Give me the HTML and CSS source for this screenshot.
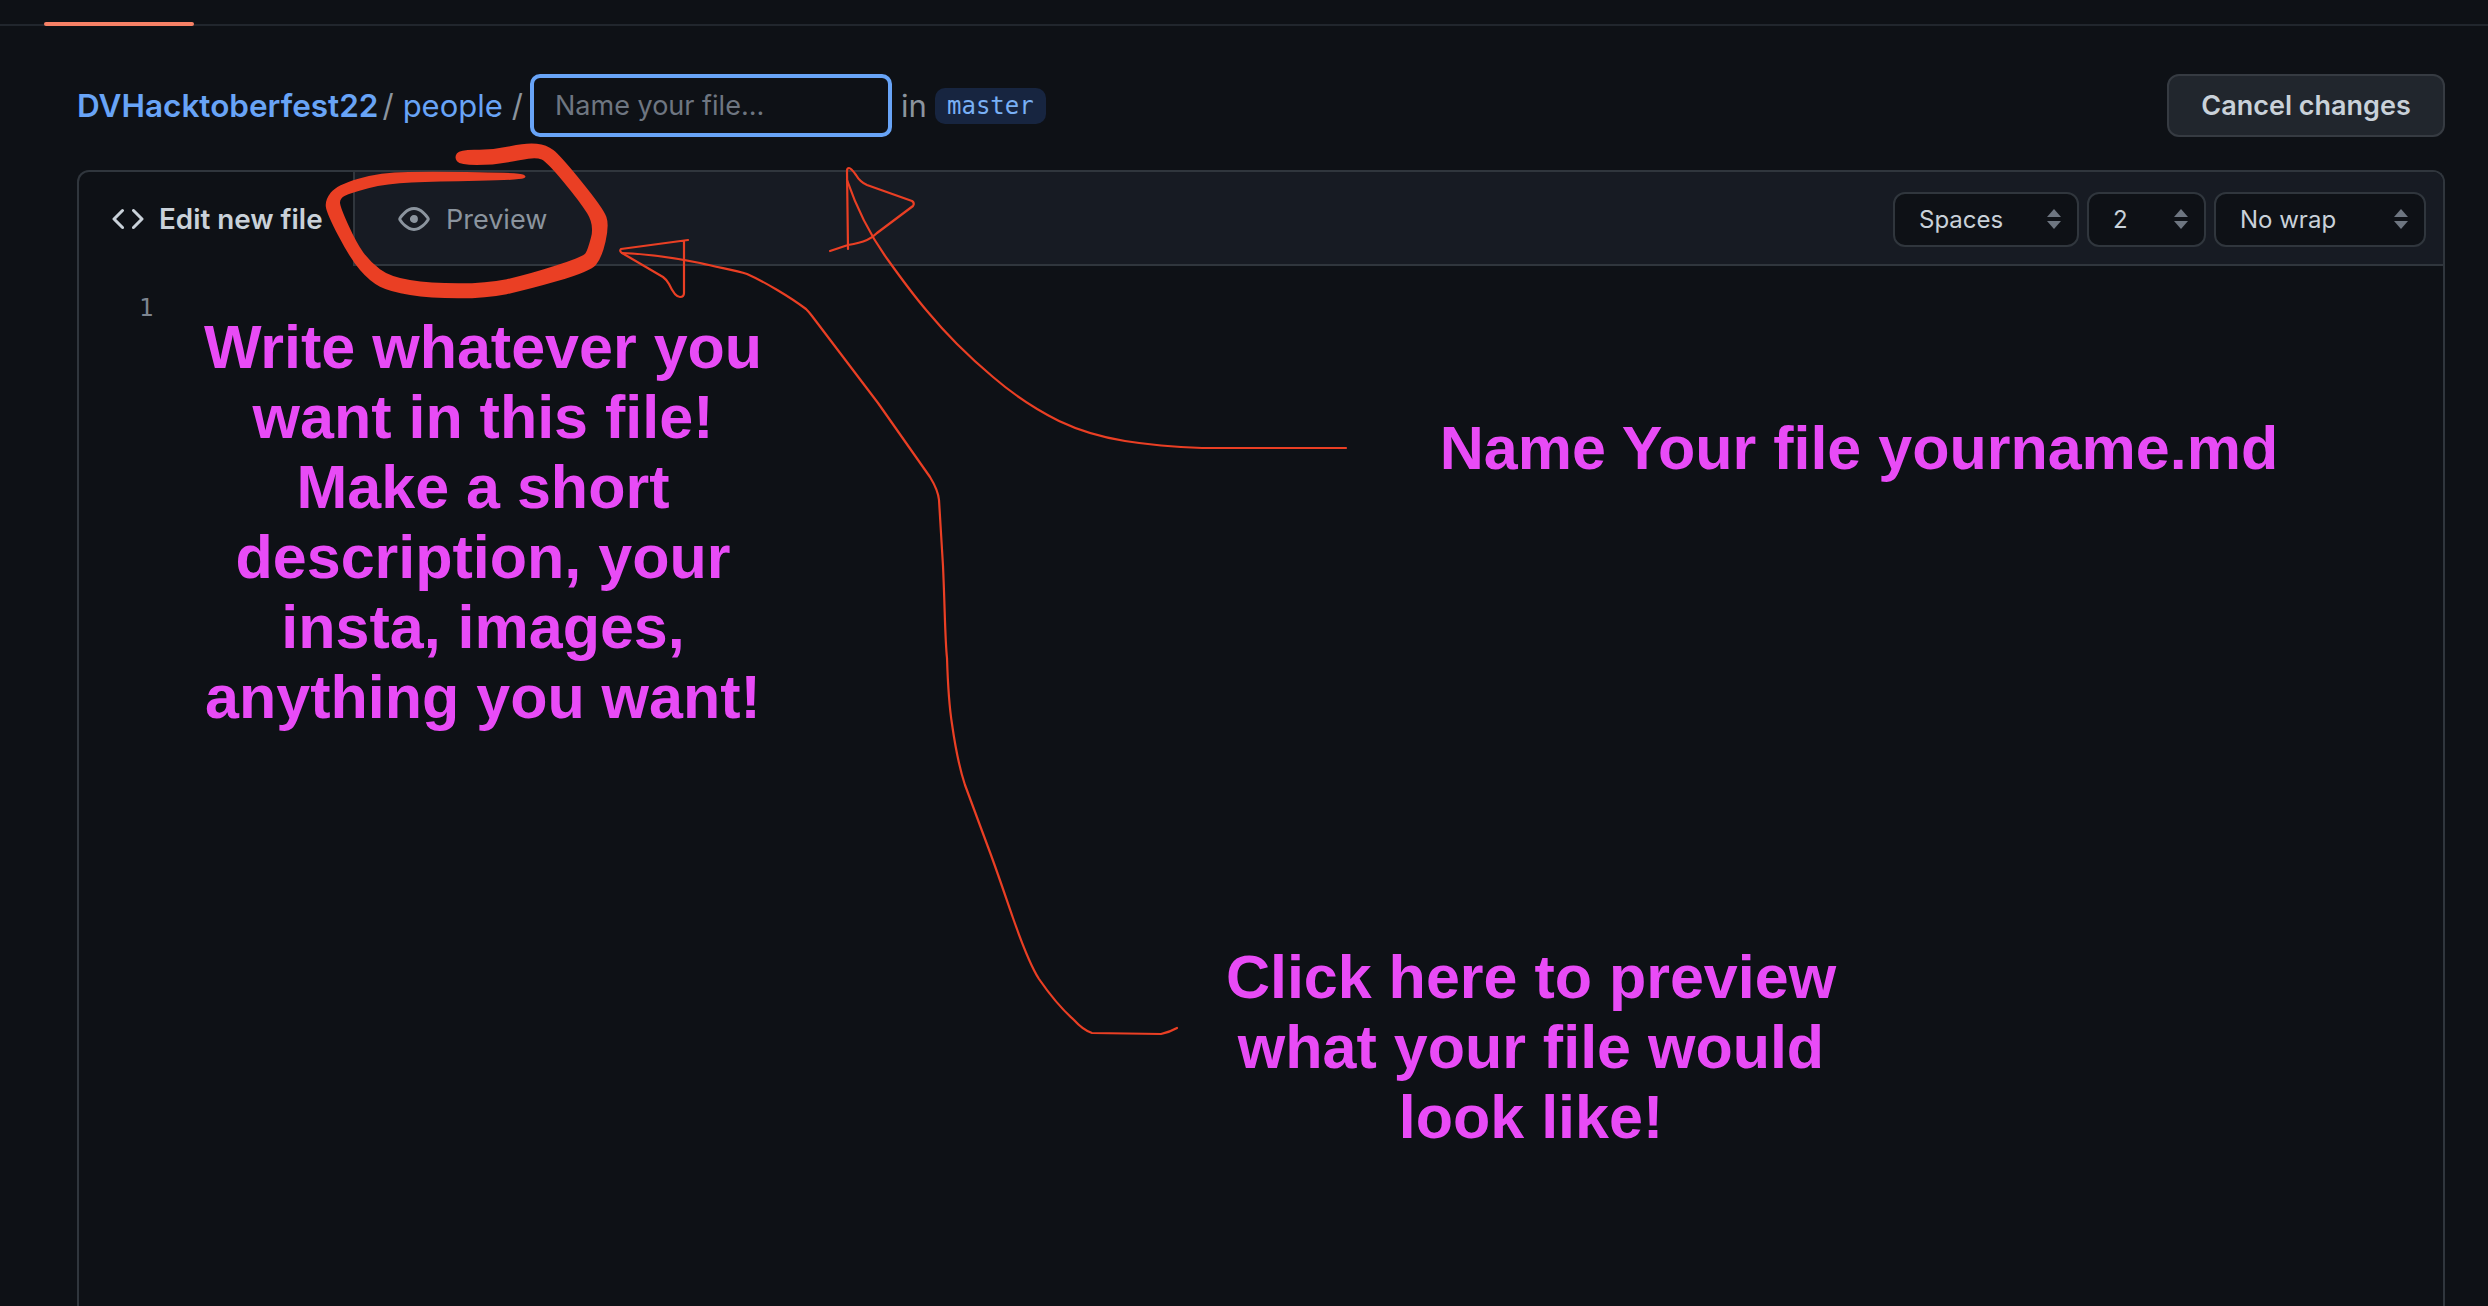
FILE: index.html
```html
<!DOCTYPE html>
<html lang="en">
<head>
<meta charset="utf-8">
<title>Edit new file</title>
<link rel="stylesheet" href="styles.css">
</head>
<body>
<div class="repo-nav"><span class="nav-current"></span></div>
<main class="page">
  <div class="path-row">
    <a class="crumb crumb-root">DVHacktoberfest22</a>
    <span class="sep sep-first">/</span>
    <a class="crumb">people</a>
    <span class="sep sep-last">/</span>
    <input class="name-input" type="text" placeholder="Name your file...">
    <span class="in-word">in</span>
    <code class="branch">master</code>
    <button class="cancel">Cancel changes</button>
  </div>
  <section class="editor">
    <div class="editor-head">
      <div class="tab tab-active">
        <svg class="icon" viewBox="0 0 16 16"><path d="m11.28 3.22 4.25 4.25a.75.75 0 0 1 0 1.06l-4.25 4.25a.749.749 0 0 1-1.275-.326.749.749 0 0 1 .215-.734L13.94 8l-3.72-3.72a.749.749 0 0 1 .326-1.275.749.749 0 0 1 .734.215Zm-6.56 0a.751.751 0 0 1 1.042.018.751.751 0 0 1 .018 1.042L2.06 8l3.72 3.72a.749.749 0 0 1-.326 1.275.749.749 0 0 1-.734-.215L.47 8.53a.75.75 0 0 1 0-1.06Z"/></svg>
        <span>Edit new file</span>
      </div>
      <div class="head-rest">
        <div class="tab tab-preview">
          <svg class="icon" viewBox="0 0 16 16"><path d="M8 2c1.981 0 3.671.992 4.933 2.078 1.27 1.091 2.187 2.345 2.637 3.023a1.62 1.62 0 0 1 0 1.798c-.45.678-1.367 1.932-2.637 3.023C11.67 13.008 9.981 14 8 14c-1.981 0-3.671-.992-4.933-2.078C1.797 10.83.88 9.576.43 8.898a1.62 1.62 0 0 1 0-1.798c.45-.677 1.367-1.931 2.637-3.022C4.33 2.992 6.019 2 8 2ZM1.679 7.932a.12.12 0 0 0 0 .136c.411.622 1.241 1.75 2.366 2.717C5.176 11.758 6.527 12.5 8 12.5c1.473 0 2.825-.742 3.955-1.715 1.124-.967 1.954-2.096 2.366-2.717a.12.12 0 0 0 0-.136c-.412-.621-1.242-1.75-2.366-2.717C10.824 4.242 9.473 3.5 8 3.5c-1.473 0-2.825.742-3.955 1.715-1.124.967-1.954 2.096-2.366 2.717ZM8 10a2 2 0 1 1-.001-3.999A2 2 0 0 1 8 10Z"/></svg>
          <span>Preview</span>
        </div>
        <div class="options">
          <div class="select sel-indent"><span>Spaces</span><svg class="updown" viewBox="0 0 16 20"><path d="M8 0l7 8H1zM8 20l-7-8h14z"/></svg></div>
          <div class="select sel-size"><span>2</span><svg class="updown" viewBox="0 0 16 20"><path d="M8 0l7 8H1zM8 20l-7-8h14z"/></svg></div>
          <div class="select sel-wrap"><span>No wrap</span><svg class="updown" viewBox="0 0 16 20"><path d="M8 0l7 8H1zM8 20l-7-8h14z"/></svg></div>
        </div>
      </div>
    </div>
    <div class="code"><span class="line-no">1</span></div>
  </section>
</main>

<svg class="scribbles" viewBox="0 0 2488 1306" width="2488" height="1306">
  <g transform="translate(320 130) scale(.33333)">
    <path class="blob" d="M411 93.5Q402 82 411 70Q420 58 470 59Q520 60 570 49Q620 38 650 41.5Q680 45 700 60Q720 75 785 155Q850 235 859 260Q868 285 856.5 335Q845 385 827.5 405Q810 425 715 452.5Q620 480 560 492.5Q500 505 415 505Q330 505 270 495Q210 485 180 470Q150 455 120 420Q90 385 55 317.5Q20 250 17.5 230Q15 210 32.5 187.5Q50 165 115 146Q180 127 265 126Q350 125 475 126.5Q600 128 611 134Q622 140 611 145Q600 150 475 152.5Q350 155 275 157.5Q200 160 145 175Q90 190 75 197.5Q60 205 60 217.5Q60 230 85 285Q110 340 130 367.5Q150 395 180 417.5Q210 440 270 450Q330 460 415 460Q500 460 560 447.5Q620 435 705 407.5Q790 380 796.5 370Q803 360 813 322.5Q823 285 801.5 250Q780 215 730 155Q680 95 665 88.5Q650 82 625 86Q600 90 560 97.5Q520 105 470 105Q420 105 411 93.5Z"/>
  </g>
  <path class="pen" d="M688 240L621 249Q619 251 622 253L663 277Q667 280 669 284Q675 297 680 297Q684 297 684 293L684 242"/>
  <path class="pen" d="M622 253C650 254 675 258 700 263C720 268 735 270 747 274C765 282 790 297 806 309Q809 312 812 316L878 403L930 477Q938 490 939 500L943 566C945 610 945 640 947 658C948 690 949 705 952 724C955 745 960 770 965 785L988 847C996 868 1005 895 1013 918C1020 938 1030 965 1039 979C1050 995 1065 1012 1074 1020Q1083 1030 1092 1033L1161 1034Q1170 1032 1177 1028"/>
  <path class="pen" d="M830 251L848 245Q860 243 867 240Q872 238 877 233L913 206Q915 203 912 201L867 185Q860 182 856 175Q851 168 849 168Q847 168 847 171L848 249"/>
  <path class="pen" d="M847 180C858 212 872 238 888 260C903 281 915 297 927 311C937 323 947 334 957 344C969 356 981 367 993 377C1015 396 1037 410 1059 421C1080 431 1100 437 1125 441C1150 445 1175 447 1202 448L1346 448"/>
</svg>

<p class="note note-write">Write whatever you<br>want in this file!<br>Make a short<br>description, your<br>insta, images,<br>anything you want!</p>
<p class="note note-name">Name Your file yourname.md</p>
<p class="note note-click">Click here to preview<br>what your file would<br>look like!</p>
</body>
</html>
```
FILE: styles.css
```css
* { box-sizing: border-box; }
html, body { margin: 0; height: 100%; }
body {
  background: #0e1116;
  color: #c9d1d9;
  font-family: Inter, "Liberation Sans", sans-serif;
  height: 1306px;
  overflow: hidden;
  position: relative;
  display: flex;
  flex-direction: column;
}
.repo-nav {
  height: 26px;
  border-bottom: 2px solid #21262d;
  padding-left: 44px;
  flex: none;
}
.nav-current {
  display: block;
  width: 150px;
  height: 4px;
  margin-top: 22px;
  background: #f78166;
  border-radius: 2px;
}
.page {
  flex: 1;
  min-height: 0;
  display: flex;
  flex-direction: column;
  padding: 48px 43px 0 77px;
}
.path-row {
  display: flex;
  align-items: center;
  height: 63px;
  font-size: 31px;
  flex: none;
}
.crumb { color: #68a4f7; }
.crumb-root { font-weight: 600; font-size: 31.5px; }
.sep { color: #8b949e; margin: 0 9px; font-weight: 400; }
.sep-first { margin-left: 4px; }
.sep-last { margin-right: 7px; }
.name-input {
  width: 362px;
  height: 63px;
  background: #0e1116;
  border: 4px solid #68a4f7;
  border-radius: 10px;
  padding: 0 21px;
  font: 400 27px Inter, "Liberation Sans", sans-serif;
  color: #c9d1d9;
  outline: none;
}
.name-input::placeholder { color: #6e7681; opacity: 1; }
.in-word { color: #8b949e; margin: 0 8px 0 9px; font-size: 31px; }
.branch {
  font: 400 24px "DejaVu Sans Mono", monospace;
  color: #79b0f5;
  background: #172540;
  border-radius: 10px;
  height: 36px;
  width: 111px;
  display: flex;
  align-items: center;
  justify-content: center;
}
.cancel {
  margin-left: auto;
  width: 278px;
  height: 63px;
  background: #21262d;
  border: 2px solid #363b42;
  border-radius: 12px;
  color: #c9d1d9;
  font: 600 27px Inter, "Liberation Sans", sans-serif;
}
.editor {
  margin-top: 33px;
  flex: 1;
  border: 2px solid #30363d;
  border-bottom: 0;
  border-radius: 12px 12px 0 0;
  display: flex;
  flex-direction: column;
  overflow: hidden;
}
.editor-head { display: flex; height: 94px; flex: none; }
.tab { display: flex; align-items: center; }
.icon { width: 32px; height: 32px; fill: currentColor; flex: none; }
.tab-active {
  width: 276px;
  gap: 15px;
  padding: 0 0 0 33px;
  font-weight: 600;
  color: #c9d1d9;
  border-right: 2px solid #30363d;
  white-space: nowrap;
  font-size: 27.8px;
}
.head-rest {
  flex: 1;
  background: #171b23;
  border-bottom: 2px solid #30363d;
  display: flex;
  align-items: center;
  justify-content: space-between;
  padding: 2px 17px 0 43px;
}
.tab-preview { gap: 16px; color: #8b949e; font-size: 27px; }
.options { display: flex; gap: 8px; }
.select {
  height: 55px;
  background: #0e1116;
  border: 2px solid #30363d;
  border-radius: 12px;
  font-size: 24px;
  color: #c9d1d9;
  display: flex;
  align-items: center;
  justify-content: space-between;
  padding: 0 15px 0 24px;
}
.sel-indent { width: 186px; }
.sel-size { width: 119px; }
.sel-wrap { width: 212px; }
.updown { width: 16px; height: 20px; fill: #6e7681; flex: none; }
.code { flex: 1; padding: 26px 0 0 60px; }
.line-no {
  display: block;
  font: 400 24px/32px "DejaVu Sans Mono", monospace;
  color: #7d8590;
}
.scribbles { position: absolute; left: 0; top: 0; pointer-events: none; }
.blob { fill: #ea3f24; }
.pen {
  fill: none;
  stroke: #ea3f24;
  stroke-width: 2.2;
  stroke-linejoin: round;
  stroke-linecap: round;
}
.note {
  position: absolute;
  margin: 0;
  font: 700 61px/70px "Liberation Sans", Arial, sans-serif;
  color: #e84bf6;
  text-align: center;
  white-space: nowrap;
  transform: translateX(-50%);
}
.note-write { left: 483px; top: 312px; }
.note-name { left: 1859px; top: 413px; }
.note-click { left: 1531px; top: 942px; }
```
